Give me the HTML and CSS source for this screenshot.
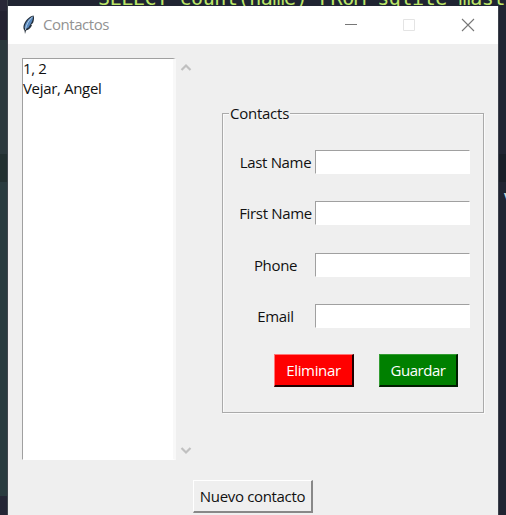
FILE: index.html
```html
<!DOCTYPE html>
<html lang="es">
<head>
<meta charset="utf-8">
<title>Contactos</title>
<link rel="stylesheet" href="styles.css">
</head>
<body>
<div class="desktop">
  <div class="code">SELECT count(name) FROM sqlite_maste</div>
  <div class="edge-left"></div>
  <div class="edge-right"><span>v</span></div>
  <main class="window">
    <header class="titlebar">
      <svg class="feather" width="14" height="20" viewBox="0 0 14 20">
        <path d="M11.500 .5C7 1.500 2.500 6 1.500 11c-.3 2 .2 3.500 1 4.500L3 19l1-3.500c3-.7 5-2.500 6-5.500l-1-.3 2-1.700c1-2.500 1.500-5.500.5-7.500z" fill="#26303c"/>
        <path d="M11 1.500C7 3 3 7.500 2.500 12.500l1 1.500 3-1.500C8.500 9 11 6 11 1.500z" fill="#5787bd"/>
        <path d="M10.500 2C7 4.500 4.500 9 3.300 15" fill="none" stroke="#b8d2ea" stroke-width=".9"/>
      </svg>
      <h1>Contactos</h1>
      <svg class="controls" width="132" height="14" viewBox="0 0 132 14" fill="none">
        <path d="M1 6.500h12" stroke="#777"/>
        <path d="M59.500 1.500h11v11h-11z" stroke="#e4e4e4"/>
        <path d="M118 1l12 12M130 1l-12 12" stroke="#777" stroke-width="1.100"/>
      </svg>
    </header>
    <div class="content">
      <ul class="listbox"><li>1, 2</li><li>Vejar, Angel</li></ul>
      <div class="scroll">
        <svg width="12" height="9" viewBox="0 0 12 9"><path d="M1.500 7L6 2.500 10.500 7" fill="none" stroke="#c0c0c0" stroke-width="2.200"/></svg>
        <svg width="12" height="9" viewBox="0 0 12 9"><path d="M1.500 2L6 6.500 10.500 2" fill="none" stroke="#c0c0c0" stroke-width="2.200"/></svg>
      </div>
      <section class="group">
        <h2><span>Contacts</span></h2>
        <div class="row"><label for="last">Last Name</label><input id="last"></div>
        <div class="row"><label for="first">First Name</label><input id="first"></div>
        <div class="row"><label for="phone">Phone</label><input id="phone"></div>
        <div class="row"><label for="email">Email</label><input id="email"></div>
        <div class="actions"><button class="danger">Eliminar</button><button class="save">Guardar</button></div>
      </section>
    </div>
    <button class="new">Nuevo contacto</button>
  </main>
</div>
</body>
</html>
```
FILE: styles.css
```css
* { box-sizing: border-box; }
body { margin: 0; overflow: hidden; font: 15px/20px "Open Sans", "Noto Sans", sans-serif; letter-spacing: -.33px; color: #111; }
.desktop { position: relative; width: 506px; height: 515px; overflow: hidden; background: #202432; padding: 6px 8px 0; }
.code { position: absolute; left: 98px; top: -14px; white-space: pre; color: #bce669; font: 20px/24px "DejaVu Sans Mono", monospace; letter-spacing: -.41px; }
.edge-left { position: absolute; left: 0; top: 0; width: 8px; height: 515px; background: linear-gradient(#282737 0 11px, #232231 11px 40px, #2b393d 40px 154px, #223031 154px 182px, #293b3f 182px 496px, #242635 496px); border-right: 1px solid #40464d; }
.edge-right { position: absolute; right: 0; top: 6px; width: 8px; height: 509px; background: linear-gradient(#202432 0 148px, #191e28 148px 176px, #202432 176px); border-left: 1px solid #3c414b; }
.edge-right span { position: absolute; left: 4px; top: 179px; color: #cad8d5; font: 20px/24px "DejaVu Sans Mono", monospace; }
.window { position: relative; width: 490px; height: 509px; background: #efefef; }
.titlebar { display: flex; align-items: center; height: 38px; padding: 0 22px 0 14px; background: #fff; }
.feather { margin-right: 7px; }
h1 { flex: 1; margin: 0; padding-bottom: 2px; font-size: 15px; font-weight: 400; letter-spacing: -.45px; color: #929292; }
.content { display: flex; height: 436px; padding-top: 14px; }
.listbox { margin: 0 0 0 14px; padding: 0; list-style: none; width: 154px; height: 402px; background: #fff; border: solid; border-width: 1px 3px 1px 1px; border-color: #a0a0a0 #f8f8f8 #fff #a0a0a0; }
.listbox li { height: 20px; line-height: 18px; }
.scroll { display: flex; flex-direction: column; justify-content: space-between; width: 12px; height: 392px; margin: 5px 0 0 4px; }
.group { width: 262px; height: 300px; margin: 55px 0 0 30px; border: 1px solid #aaa; box-shadow: inset 1px 1px #fafafa, 1px 1px #fafafa; }
h2 { margin: -11px 0 0 6px; height: 21px; font-size: 15px; font-weight: 400; letter-spacing: -.25px; }
h2 span { display: inline-block; padding: 0 1px; background: #efefef; }
.row { display: flex; height: 24px; margin: 0 0 27.300px 13px; }
h2 + .row { margin-top: 26px; }
label { width: 79px; padding: 2px 0 0; text-align: center; white-space: nowrap; }
input { width: 155px; height: 24px; padding: 0; background: #fff; border: 1px solid; border-color: #a0a0a0 #fff #fff #a0a0a0; border-radius: 0; }
.actions { display: flex; gap: 25px; margin: -1px 0 0 51px; }
button { font: inherit; letter-spacing: inherit; padding: 0; white-space: nowrap; border: 2px solid; border-radius: 0; }
.danger, .save { height: 33px; padding-bottom: 1px; color: #fff; border-width: 1px 2px 2px 1px; }
.danger { width: 80px; background: #f00; border-color: #ff7777 #200000 #200000 #ff7777; }
.save { width: 79px; background: #008000; border-color: #329c32 #001d00 #001d00 #329c32; letter-spacing: -.45px; }
.new { display: block; width: 120px; height: 33px; margin: 0 0 0 185px; color: #111; background: #efefef; border-width: 1px 2px 2px 1px; border-color: #fff #888 #888 #fff; }
```
